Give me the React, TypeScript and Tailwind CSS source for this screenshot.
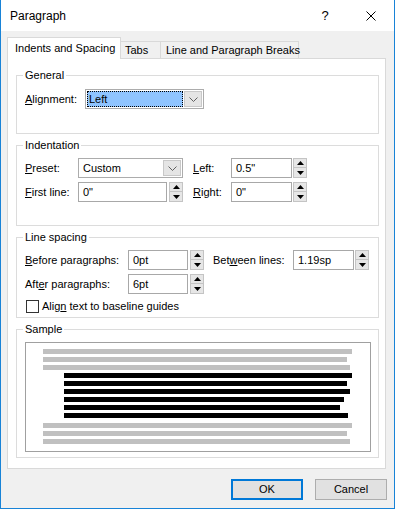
import React from 'react';

const TOP_LINES = ['w-[309px]', 'w-[304px]', 'w-[307px]'];
const BODY_LINES = ['w-[288px]', 'w-[283px]', 'w-[286px]', 'w-[280px]', 'w-[276px]', 'w-[284px]'];

const Key: React.FC<{ children: React.ReactNode }> = ({ children }) => (
  <span className="underline underline-offset-[1px]">{children}</span>
);

const Spinner: React.FC<{ className?: string }> = ({ className = '' }) => (
  <div className={`flex h-[20px] w-[14px] flex-col ${className}`}>
    <div className="flex h-[10px] items-center justify-center border border-[#c4c4c4] bg-[#e6e6e6]">
      <svg width="7" height="4" viewBox="0 0 7 4"><polygon points="3.5,0 7,4 0,4" fill="#000" /></svg>
    </div>
    <div className="flex h-[10px] items-center justify-center border border-t-0 border-[#c4c4c4] bg-[#e6e6e6]">
      <svg width="7" height="4" viewBox="0 0 7 4"><polygon points="0,0 7,0 3.5,4" fill="#000" /></svg>
    </div>
  </div>
);

const Chevron = () => (
  <svg width="9" height="5" viewBox="0 0 9 5">
    <polyline points="0.5,0.5 4.5,4.5 8.5,0.5" fill="none" stroke="#606060" strokeWidth="1" />
  </svg>
);

const TextBox: React.FC<{ value: string; className: string }> = ({ value, className }) => (
  <div className={`flex h-[20px] items-center border border-[#a8a8a8] bg-white pl-[4px] ${className}`}>{value}</div>
);

const Group: React.FC<{ title: string; className: string; children: React.ReactNode }> = ({ title, className, children }) => (
  <fieldset className={`w-[363px] border border-[#dcdcdc] pl-[8px] ${className}`}>
    <legend className="-ml-[2px] px-[2px] leading-[14px]">{title}</legend>
    {children}
  </fieldset>
);

export default function App() {
  return (
    <div className="flex h-[509px] w-[395px] flex-col whitespace-nowrap border-x border-b border-[#1883d7] bg-[#f0f0f0] font-['Liberation_Sans',Arial,sans-serif] text-[11px] text-black">
      {/* Title bar */}
      <div className="flex h-[31px] shrink-0 items-center bg-white pl-[9px]">
        <span className="text-[12px]">Paragraph</span>
        <div className="ml-auto flex h-full">
          <div className="flex w-[46px] items-center justify-center text-[13px]">?</div>
          <div className="flex w-[46px] items-center justify-center">
            <svg width="10" height="10" viewBox="0 0 10 10">
              <path d="M0.5 0.5 L9.5 9.5 M9.5 0.5 L0.5 9.5" stroke="#000" strokeWidth="1" />
            </svg>
          </div>
        </div>
      </div>

      <div className="flex flex-col px-[6px] pt-[6px]">
        {/* Tabs */}
        <div className="flex h-[21px] items-end">
          <div className="relative z-10 -mb-px flex h-[22px] w-[114px] items-center border border-b-0 border-[#d9d9d9] bg-white pl-[7px]">
            Indents and Spacing
          </div>
          <div className="flex h-[17px] w-[40px] items-center border border-b-0 border-l-0 border-[#d9d9d9] pl-[4px]">Tabs</div>
          <div className="flex h-[17px] w-[138px] items-center border border-b-0 border-l-0 border-[#d9d9d9] pl-[5px]">
            Line and Paragraph Breaks
          </div>
        </div>

        {/* Panel */}
        <div className="flex h-[411px] w-[379px] flex-col border border-[#d9d9d9] bg-white pl-[8px] pt-[9px]">
          <Group title="General" className="h-[66px]">
            <div className="mt-[7px] flex items-center">
              <span className="w-[60px]"><Key>A</Key>lignment:</span>
              <div className="flex h-[20px] w-[119px] items-stretch border border-[#acacac] bg-white p-px">
                <div className="flex flex-1 items-center border border-dotted border-black bg-[#8fc4ff] pl-px">Left</div>
                <div className="ml-px flex w-[18px] items-center justify-center border border-[#c8c8c8] bg-[#e5e5e5]">
                  <Chevron />
                </div>
              </div>
            </div>
          </Group>

          <Group title="Indentation" className="mt-[4px] h-[88px]">
            <div className="mt-[6px] flex items-center">
              <span className="w-[53px]"><Key>P</Key>reset:</span>
              <div className="flex h-[20px] w-[105px] items-stretch border border-[#acacac] bg-white p-px">
                <div className="flex flex-1 items-center pl-[3px]">Custom</div>
                <div className="flex w-[18px] items-center justify-center border border-[#c8c8c8] bg-[#e5e5e5]">
                  <Chevron />
                </div>
              </div>
              <span className="ml-[10px] w-[38px]"><Key>L</Key>eft:</span>
              <TextBox value={'0.5"'} className="w-[61px]" />
              <Spinner className="ml-px" />
            </div>
            <div className="mt-[4px] flex items-center">
              <span className="w-[53px]"><Key>F</Key>irst line:</span>
              <TextBox value={'0"'} className="w-[89px]" />
              <Spinner className="ml-[2px]" />
              <span className="ml-[10px] w-[38px]"><Key>R</Key>ight:</span>
              <TextBox value={'0"'} className="w-[61px]" />
              <Spinner className="ml-px" />
            </div>
          </Group>

          <Group title="Line spacing" className="mt-[4px] h-[88px]">
            <div className="mt-[6px] flex items-center">
              <span className="w-[103px]"><Key>B</Key>efore paragraphs:</span>
              <TextBox value="0pt" className="w-[60px]" />
              <Spinner className="ml-[2px]" />
              <span className="ml-[9px] w-[80px]">Bet<Key>w</Key>een lines:</span>
              <TextBox value="1.19sp" className="w-[61px]" />
              <Spinner className="ml-px" />
            </div>
            <div className="mt-[4px] flex items-center">
              <span className="w-[103px]">Aft<Key>e</Key>r paragraphs:</span>
              <TextBox value="6pt" className="w-[60px]" />
              <Spinner className="ml-[2px]" />
            </div>
            <label className="mt-[4px] flex items-center">
              <span className="ml-px h-[13px] w-[13px] border border-[#333] bg-white" />
              <span className="ml-[3px]">Alig<Key>n</Key> text to baseline guides</span>
            </label>
          </Group>

          <Group title="Sample" className="mt-[4px] h-[136px]">
            <div className="mt-[6px] flex h-[110px] w-[346px] flex-col border border-[#a0a0a0] pl-[17px] pt-[6px]">
              <div className="flex flex-col gap-[3px]">
                {TOP_LINES.map((w, i) => (
                  <div key={i} className={`h-[5px] bg-[#c0c0c0] ${w}`} />
                ))}
              </div>
              <div className="ml-[21px] mt-[3px] flex flex-col gap-[3px]">
                {BODY_LINES.map((w, i) => (
                  <div key={i} className={`h-[5px] bg-black ${w}`} />
                ))}
              </div>
              <div className="mt-[5px] flex flex-col gap-[3px]">
                {TOP_LINES.map((w, i) => (
                  <div key={i} className={`h-[5px] bg-[#c0c0c0] ${w}`} />
                ))}
              </div>
            </div>
          </Group>
        </div>

        {/* Buttons */}
        <div className="mt-[10px] flex justify-end gap-[12px] pr-px">
          <button className="h-[21px] w-[72px] border-2 border-[#0078d7] bg-[#e1e1e1]">OK</button>
          <button className="h-[21px] w-[72px] border border-[#adadad] bg-[#e1e1e1]">Cancel</button>
        </div>
      </div>
    </div>
  );
}
